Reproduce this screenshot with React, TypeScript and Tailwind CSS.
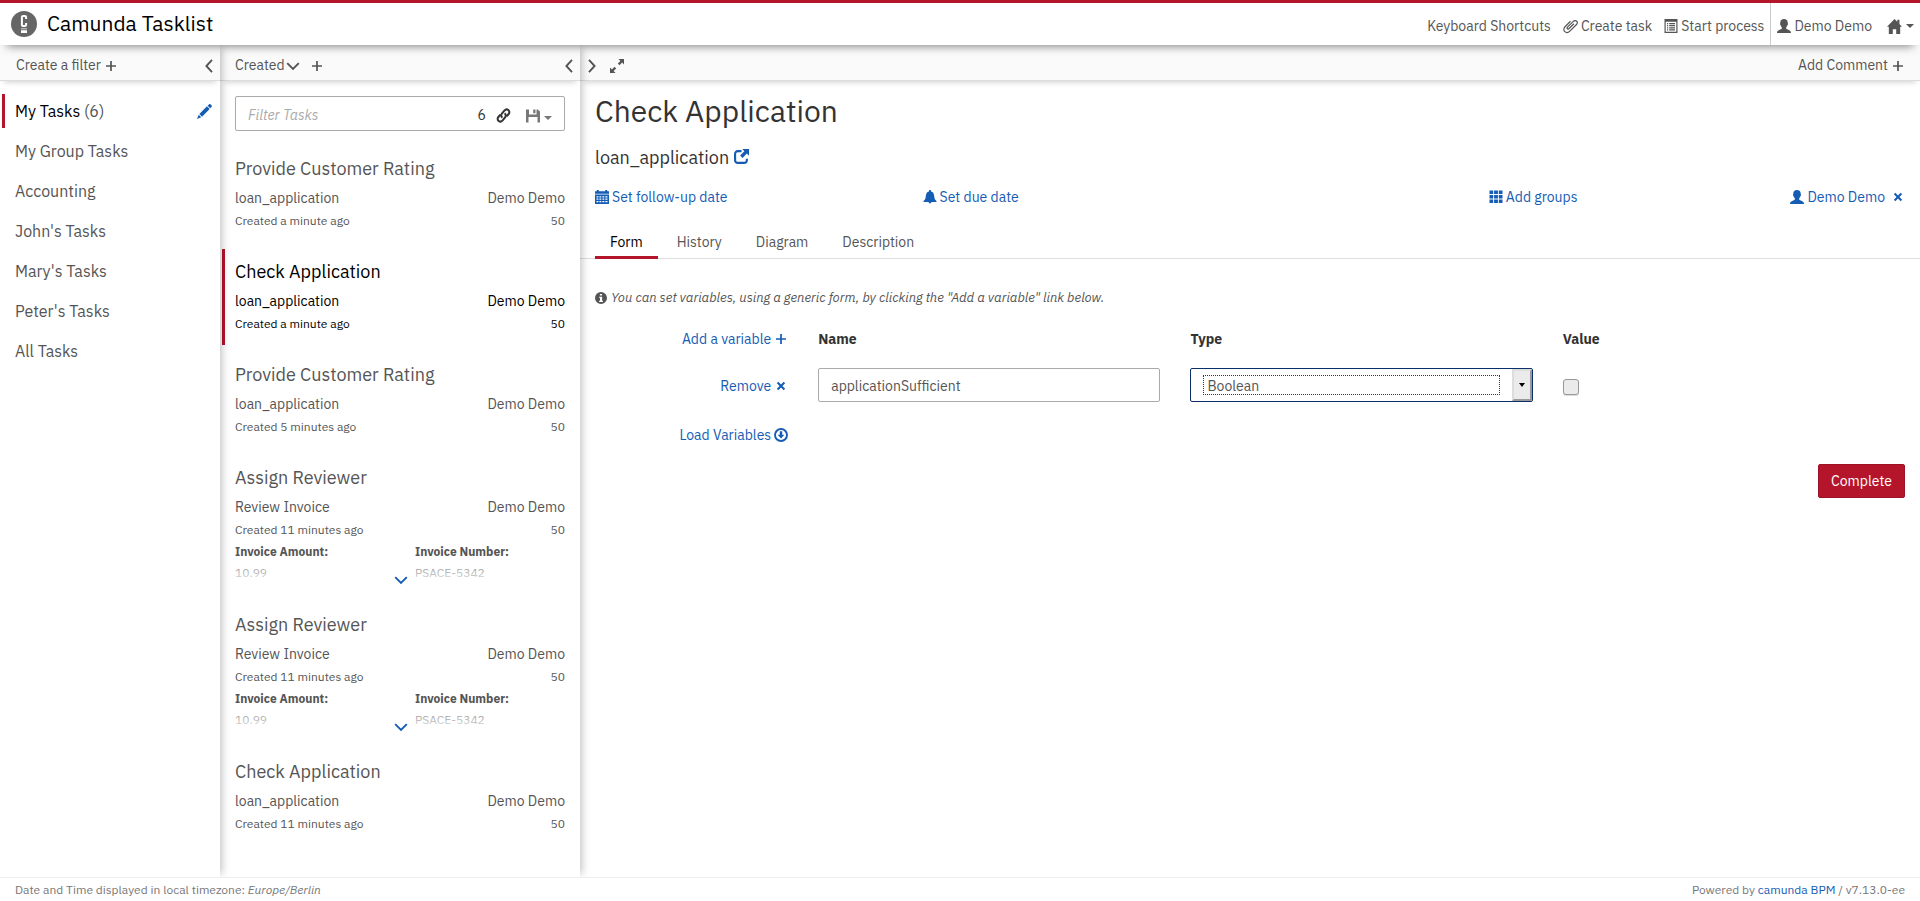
import type { ReactNode } from "react";

type IconProps = { className?: string };

function Svg({ size = 14, className = "", children }: { size?: number; className?: string; children: ReactNode }) {
  return (
    <svg
      width={size}
      height={size}
      viewBox="0 0 14 14"
      fill="currentColor"
      aria-hidden="true"
      className={`shrink-0 ${className}`}
    >
      {children}
    </svg>
  );
}

const Logo = () => (
  <svg width="26" height="26" viewBox="0 0 26 26" aria-hidden="true" className="shrink-0">
    <circle cx="13" cy="13" r="13" fill="#666" />
    <path d="M15.1 7.9V6.2a1.3 1.3 0 0 0-1.3-1.3h-1.6a1.3 1.3 0 0 0-1.3 1.3v7.6a1.3 1.3 0 0 0 1.3 1.3h1.6a1.3 1.3 0 0 0 1.3-1.3v-1.7" fill="none" stroke="#fff" strokeWidth="2" />
    <path d="M10 17.4h6v.8h-6zM10 19.3h6v2.7h-6z" fill="#fff" />
  </svg>
);

const Plus = ({ className }: IconProps) => (
  <Svg size={10} className={className}>
    <path d="M5.800 0h2.400v5.800H14v2.400H8.200V14H5.800V8.200H0V5.800h5.800z" />
  </Svg>
);

const Cross = ({ className }: IconProps) => (
  <Svg size={10} className={className}>
    <path d="M3.2 1.2 7 5l3.800-3.800 2 2L9 7l3.800 3.800-2 2L7 9l-3.800 3.800-2-2L5 7 1.200 3.200z" />
  </Svg>
);

const Chevron = ({ className, d }: IconProps & { d: string }) => (
  <Svg size={14} className={className}>
    <path d={d} fill="none" stroke="currentColor" strokeWidth="1.9" />
  </Svg>
);
const LEFT = "M10 .8 4.400 7l5.600 6.200";
const RIGHT = "M4 .8 9.600 7 4 13.200";
const DOWN = "M1.200 4.200 7 10l5.800-5.800";

const Caret = ({ className }: IconProps) => (
  <svg width="8" height="4" viewBox="0 0 8 4" fill="currentColor" aria-hidden="true" className={`shrink-0 ${className ?? ""}`}>
    <path d="M0 0h8L4 4z" />
  </svg>
);

const User = () => (
  <Svg>
    <path d="M7 0c2.300 0 3.700 1.400 3.700 3.600 0 .4 0 .6.200.9.300.4.100 1.200-.4 1.500-.2 1-.7 1.700-1.300 2.300v1.300c.3.600 1.400.9 2.500 1.300 1.500.6 2.300 1.200 2.300 3.100H0c0-1.900.8-2.500 2.300-3.100 1.100-.4 2.200-.7 2.500-1.300V8.300C4.200 7.700 3.700 7 3.500 6c-.5-.3-.7-1.100-.4-1.500.2-.3.200-.5.2-.9C3.300 1.400 4.700 0 7 0z" />
  </Svg>
);

const Home = () => (
  <Svg size={15}>
    <path d="M7 0 9.600 2.600V.8h2v3.800L14 7.300h-1.700V14H8.600V9.500H5.400V14H1.700V7.300H0z" />
  </Svg>
);

const Paperclip = () => (
  <Svg size={15}>
    <path
      d="M10.200 4.400 5.700 8.900c-.6.600-1.300.6-1.700.2s-.3-1 .2-1.600l5.200-5c1.200-1.200 2.600-1.300 3.400-.4s.7 2.200-.4 3.300l-6 5.900c-1.500 1.500-3.400 1.700-4.700.5s-1.200-3.200.2-4.600L7 2.100"
      fill="none"
      stroke="currentColor"
      strokeWidth="1.100"
    />
  </Svg>
);

const ListAlt = () => (
  <Svg>
    <path
      fillRule="evenodd"
      d="M.5 0h13v14H.5zM1.700 2.700v10.100h10.600V2.700zM3 4h1.200v1.200H3zM5.200 4H11v1.200H5.200zM3 6.100h1.200v1.200H3zM5.200 6.100H11v1.200H5.200zM3 8.200h1.200v1.200H3zM5.200 8.200H11v1.200H5.200zM3 10.300h1.200v1.200H3zM5.200 10.300H11v1.200H5.200z"
    />
  </Svg>
);

const Pencil = () => (
  <Svg size={15}>
    <path d="M11.400.3c.3-.3.800-.3 1.100 0l1.200 1.200c.3.300.3.800 0 1.100l-1.400 1.400-2.400-2.400zM9.300 2.200l2.500 2.500-7.100 7.100-2.500-2.500zM1.600 10l2.400 2.400-4 1.500z" />
  </Svg>
);

const LinkIcon = () => (
  <Svg size={15}>
    <g fill="none" stroke="currentColor" strokeWidth="1.900">
      <path d="M6 9C4.600 8 4.400 6.500 5.500 5.200l2.300-2.800c1.100-1.200 2.600-1.400 3.700-.5s1.300 2.500.3 3.700l-1.900 2.200" />
      <path d="M8 5c1.400 1 1.600 2.500.5 3.800l-2.300 2.800c-1.100 1.200-2.600 1.400-3.700.5s-1.300-2.500-.3-3.700l1.900-2.200" />
    </g>
  </Svg>
);

const Floppy = () => (
  <Svg>
    <path fillRule="evenodd" d="M0 .5h3v5h7.500v-5h1.300L14 2.500v11h-2.500V8h-9v5.500H0zM7.200.5h2.300v3.800H7.200z" />
  </Svg>
);

const Expand = () => (
  <Svg>
    <path d="M8.500 0H14v5.500l-1.900-1.900-2.600 2.600-1.700-1.700 2.600-2.600zM0 8.500l1.900 1.900 2.600-2.600 1.700 1.700-2.600 2.600L5.500 14H0z" />
  </Svg>
);

const Share = () => (
  <Svg size={15}>
    <path d="M7 2H3.500A2.500 2.500 0 0 0 1 4.500v6A2.500 2.500 0 0 0 3.500 13h6a2.500 2.500 0 0 0 2.500-2.500V9" fill="none" stroke="currentColor" strokeWidth="2" />
    <path d="M7.700 0H14v6.300l-2-2-4 4L5.700 6l4-4z" />
  </Svg>
);

const Calendar = () => (
  <Svg>
    <path
      fillRule="evenodd"
      d="M0 1.200h1.800V0h2v1.200h6.400V0h2v1.200H14v2.600H0zM0 4.600h14V14H0zM1.500 6.200v1.200h1.900V6.200zM4.400 6.200v1.200h1.900V6.200zM7.400 6.200v1.200h1.900V6.200zM10.300 6.200v1.200h2.200V6.200zM1.500 8.600v1.200h1.900V8.600zM4.400 8.600v1.200h1.900V8.600zM7.400 8.600v1.200h1.900V8.600zM10.300 8.600v1.200h2.200V8.600zM1.500 11v1.200h1.900V11zM4.400 11v1.200h1.900V11zM7.400 11v1.200h1.900V11zM10.300 11v1.200h2.200V11z"
    />
  </Svg>
);

const Bell = () => (
  <Svg>
    <path d="M7 0c.6 0 1 .4 1 1v.5c2.200.5 3 2.200 3.200 4.500.2 2.500.6 3.500 2.300 5v1H8.400a1.400 1.400 0 0 1-2.800 0H.500v-1c1.700-1.500 2.100-2.500 2.300-5C3 3.700 3.800 2 6 1.500V1c0-.6.400-1 1-1z" />
  </Svg>
);

const Grid = () => (
  <Svg>
    <path d="M.5.500h3.700v3.500H.5zM5.100.500h3.800v3.500H5.100zM9.800.500h3.700v3.500H9.800zM.5 5h3.700v3.500H.5zM5.100 5h3.800v3.500H5.100zM9.800 5h3.700v3.500H9.800zM.5 9.500h3.700V13H.5zM5.100 9.500h3.800V13H5.100zM9.800 9.500h3.700V13H9.800z" />
  </Svg>
);

const Info = () => (
  <Svg size={12}>
    <path fillRule="evenodd" d="M7 0a7 7 0 1 1 0 14A7 7 0 0 1 7 0zM5.700 2.200v2h2.500v-2zM4.800 5.400v1.300h1v3.600h-1v1.400h4.500v-1.400h-1V5.400z" />
  </Svg>
);

const Download = () => (
  <Svg>
    <circle cx="7" cy="7" r="6" fill="none" stroke="currentColor" strokeWidth="1.900" />
    <path d="M5.800 3.200h2.400v3.600h2.100L7 10.600 3.700 6.800h2.100z" />
  </Svg>
);

const filters = ["My Group Tasks", "Accounting", "John's Tasks", "Mary's Tasks", "Peter's Tasks", "All Tasks"];

type Task = { id: number; name: string; process: string; created: string; invoice?: boolean; active?: boolean };
const tasks: Task[] = [
  { id: 1, name: "Provide Customer Rating", process: "loan_application", created: "Created a minute ago" },
  { id: 2, name: "Check Application", process: "loan_application", created: "Created a minute ago", active: true },
  { id: 3, name: "Provide Customer Rating", process: "loan_application", created: "Created 5 minutes ago" },
  { id: 4, name: "Assign Reviewer", process: "Review Invoice", created: "Created 11 minutes ago", invoice: true },
  { id: 5, name: "Assign Reviewer", process: "Review Invoice", created: "Created 11 minutes ago", invoice: true },
  { id: 6, name: "Check Application", process: "loan_application", created: "Created 11 minutes ago" },
];

const barClass =
  "flex h-[36px] shrink-0 items-center border-b border-[#ddd] bg-[#fafafa] pt-[6px] shadow-[0_5px_6px_-4px_rgba(0,0,0,0.2)]";
const panelShadow = "shadow-[5px_0_8px_-3px_rgba(0,0,0,0.24)]";

function Header() {
  return (
    <header className="relative z-30 flex h-[45px] items-stretch border-t-[3px] border-[#b5152b] bg-white pl-[11px] pr-[6px] shadow-[0_8px_10px_-7px_rgba(0,0,0,0.5)]">
      <a href="#home" className="flex items-center gap-[10px] text-[21px] text-black">
        <Logo />
        Camunda Tasklist
      </a>
      <nav className="ml-auto flex items-stretch pt-[4px]">
        <button type="button" className="px-[6px]">Keyboard Shortcuts</button>
        <button type="button" className="flex items-center gap-[3px] px-[6px]">
          <Paperclip />
          Create task
        </button>
        <button type="button" className="flex items-center gap-[3px] px-[6px]">
          <ListAlt />
          Start process
        </button>
        <div className="-mt-[4px] flex border-l border-[#ccc] pt-[4px]">
          <button type="button" className="flex items-center gap-[3px] pl-[6px] pr-[15px]">
            <User />
            Demo Demo
          </button>
          <button type="button" aria-label="Apps" className="flex items-center gap-1">
            <Home />
            <Caret />
          </button>
        </div>
      </nav>
    </header>
  );
}

function Filters() {
  return (
    <aside className={`relative z-20 w-[220px] shrink-0 bg-white ${panelShadow}`}>
      <div className={`${barClass} justify-between pl-[16px] pr-[4px]`}>
        <button type="button" className="flex items-center gap-[5px]">
          Create a filter
          <Plus />
        </button>
        <button type="button" aria-label="Collapse filters">
          <Chevron d={LEFT} />
        </button>
      </div>
      <ul className="flex flex-col gap-[6px] pl-[2px] pt-[13px] text-[16px]">
        <li className="flex h-[34px] items-center justify-between border-l-[3px] border-[#b5152b] pl-[10px] pr-[8px]">
          <a href="#my-tasks">
            <span className="text-black">My Tasks</span> (6)
          </a>
          <button type="button" aria-label="Edit filter" className="text-[#155cb5]">
            <Pencil />
          </button>
        </li>
        {filters.map((name) => (
          <li key={name} className="flex h-[34px] items-center pl-[13px]">
            <a href="#filter">{name}</a>
          </li>
        ))}
      </ul>
    </aside>
  );
}

function TaskItem({ task }: { task: Task }) {
  return (
    <li className={`border-l-[3px] pb-[12px] pl-[10px] pr-[15px] pt-[11px] ${task.active ? "border-[#b5152b] text-black" : "border-transparent"}`}>
      <h2 className="text-[18px] leading-[24px]">
        <a href="#task">{task.name}</a>
      </h2>
      <div className="mt-[7px] flex justify-between leading-[20px]">
        <span>{task.process}</span>
        <span>Demo Demo</span>
      </div>
      <div className="mt-[4px] flex justify-between text-[12px] leading-[18px]">
        <span>{task.created}</span>
        <span>50</span>
      </div>
      {task.invoice && (
        <div className="relative mt-[2px] text-[12px]">
          <dl className="grid grid-cols-[180px_1fr]">
            <div>
              <dt className="font-bold leading-[22px]">Invoice Amount:</dt>
              <dd className="leading-[20px]">10.99</dd>
            </div>
            <div>
              <dt className="font-bold leading-[22px]">Invoice Number:</dt>
              <dd className="leading-[20px]">PSACE-5342</dd>
            </div>
          </dl>
          <div className="pointer-events-none absolute inset-x-0 bottom-0 h-[20px] bg-linear-to-b from-white/30 to-white/90" />
          <button type="button" aria-label="Show more" className="absolute -bottom-[4px] left-[159px] text-[#155cb5]">
            <Chevron d={DOWN} />
          </button>
        </div>
      )}
    </li>
  );
}

function TaskList() {
  return (
    <section className={`relative z-10 w-[360px] shrink-0 bg-white ${panelShadow}`}>
      <div className={`${barClass} pl-[15px] pr-[4px]`}>
        <button type="button" className="flex items-center gap-px">
          Created
          <Chevron d={DOWN} />
        </button>
        <button type="button" aria-label="Add sorting" className="ml-[12px]">
          <Plus />
        </button>
        <button type="button" aria-label="Collapse tasks" className="ml-auto">
          <Chevron d={LEFT} />
        </button>
      </div>
      <div className="mx-[15px] mt-[15px] flex h-[35px] items-center rounded-[2px] border border-[#aaa] px-[12px] pt-[4px]">
        <input
          type="text"
          aria-label="Filter Tasks"
          placeholder="Filter Tasks"
          className="min-w-0 flex-1 bg-transparent outline-none placeholder:italic placeholder:text-[#aaa]"
        />
        <span className="text-[#333]">6</span>
        <button type="button" aria-label="Copy link" className="ml-[10px] text-[#333]">
          <LinkIcon />
        </button>
        <button type="button" aria-label="Save filter" className="ml-[15px] flex items-center gap-1 text-[#777]">
          <Floppy />
          <Caret className="mt-[4px]" />
        </button>
      </div>
      <ul className="flex flex-col gap-[7px] pl-[2px] pt-[15px]">
        {tasks.map((task) => (
          <TaskItem key={task.id} task={task} />
        ))}
      </ul>
    </section>
  );
}

const linkClass = "flex items-center gap-[3px] text-[#155cb5]";
const formRow = "grid grid-cols-[193fr_342fr_342fr_342fr] items-center gap-x-[30px]";
const tabClass = "-mb-px flex h-[32px] items-center border-b-[3px] px-[15px] pt-[2px]";

function Detail() {
  return (
    <main className="min-w-0 flex-1 bg-white">
      <div className={`${barClass} pl-[5px] pr-[17px]`}>
        <button type="button" aria-label="Expand tasks">
          <Chevron d={RIGHT} />
        </button>
        <button type="button" aria-label="Full screen" className="ml-[11px]">
          <Expand />
        </button>
        <button type="button" className="ml-auto flex items-center gap-[5px]">
          Add Comment
          <Plus />
        </button>
      </div>

      <div className="px-[15px] pt-[9px]">
        <h1 className="text-[30px] leading-[42px] text-[#333]">Check Application</h1>
        <div className="mt-[13px] flex items-center gap-[5px] text-[18px] leading-[26px] text-[#333]">
          loan_application
          <a href="#process" aria-label="Open process" className="pb-[3px] text-[#155cb5]">
            <Share />
          </a>
        </div>
        <div className="mt-[16px] grid grid-cols-4 leading-[20px]">
          <button type="button" className={`${linkClass} justify-self-start`}>
            <Calendar />
            Set follow-up date
          </button>
          <button type="button" className={`${linkClass} justify-self-start`}>
            <Bell />
            Set due date
          </button>
          <button type="button" className={`${linkClass} justify-self-end`}>
            <Grid />
            Add groups
          </button>
          <div className={`${linkClass} justify-self-end`}>
            <button type="button" className={linkClass}>
              <User />
              Demo Demo
            </button>
            <button type="button" aria-label="Remove assignee" className="ml-[5px] mr-[2px]">
              <Cross />
            </button>
          </div>
        </div>
      </div>

      <nav className="mt-[20px] flex gap-[4px] border-b border-[#ddd] px-[15px]">
        <a href="#form" className={`${tabClass} border-[#b5152b] text-black`}>Form</a>
        <a href="#history" className={`${tabClass} border-transparent`}>History</a>
        <a href="#diagram" className={`${tabClass} border-transparent`}>Diagram</a>
        <a href="#description" className={`${tabClass} border-transparent`}>Description</a>
      </nav>

      <form className="px-[15px] pt-[29px]">
        <p className="flex items-center gap-1 text-[13px] italic leading-[20px]">
          <Info />
          You can set variables, using a generic form, by clicking the "Add a variable" link below.
        </p>

        <div className={`${formRow} mt-[21px] leading-[20px]`}>
          <button type="button" className="flex items-center gap-[5px] justify-self-end pr-[2px] text-[#155cb5]">
            Add a variable
            <Plus />
          </button>
          <label htmlFor="var-name" className="font-bold text-[#333]">Name</label>
          <label htmlFor="var-type" className="font-bold text-[#333]">Type</label>
          <label htmlFor="var-value" className="font-bold text-[#333]">Value</label>
        </div>

        <div className={`${formRow} mt-[19px]`}>
          <button type="button" className="flex items-center gap-[5px] justify-self-end pr-[2px] pt-[2px] text-[#155cb5]">
            Remove
            <Cross />
          </button>
          <input
            id="var-name"
            type="text"
            defaultValue="applicationSufficient"
            className="h-[34px] w-full rounded-[2px] border border-[#aaa] px-[12px] pt-[2px] outline-none"
          />
          <div className="flex h-[34px] items-stretch rounded-[2px] border border-[#0b2f6b]">
            <select
              id="var-type"
              defaultValue="Boolean"
              className="my-[6px] ml-[12px] mr-[12px] min-w-0 flex-1 appearance-none border border-dotted border-[#333] bg-white px-[3px] pt-px leading-[16px] outline-none"
            >
              <option>Boolean</option>
            </select>
            <span className="flex w-[20px] items-center justify-center border-2 border-b-[#999] border-l-[#ddd] border-r-[#999] border-t-[#ddd] bg-[#ebebeb] text-black">
              <svg width="6" height="4" viewBox="0 0 6 4" fill="currentColor" aria-hidden="true">
                <path d="M0 0h6L3 4z" />
              </svg>
            </span>
          </div>
          <input
            id="var-value"
            type="checkbox"
            className="mt-[4px] size-[16px] appearance-none rounded-[3px] border border-[#999] bg-[#ebebeb] shadow-[0_1px_1px_rgba(0,0,0,0.15)]"
          />
        </div>

        <div className={`${formRow} mt-[23px] leading-[20px]`}>
          <button type="button" className="flex items-center gap-[3px] justify-self-end text-[#155cb5]">
            Load Variables
            <Download />
          </button>
        </div>

        <div className="mt-[19px] flex justify-end">
          <button type="submit" className="h-[34px] rounded-[2px] border border-[#9d1226] bg-[#b5152b] px-[12px] text-white">
            Complete
          </button>
        </div>
      </form>
    </main>
  );
}

export default function App() {
  return (
    <div className="flex min-h-screen flex-col bg-white font-['IBM_Plex_Sans',Roboto,sans-serif] text-[14px] text-[#555]">
      <Header />
      <div className="flex flex-1 items-stretch">
        <Filters />
        <TaskList />
        <Detail />
      </div>
      <footer className="relative z-30 flex h-[24px] items-center justify-between border-t border-[#eee] bg-white px-[15px] text-[12px] text-[#777]">
        <span>
          Date and Time displayed in local timezone: <em>Europe/Berlin</em>
        </span>
        <span>
          Powered by <a href="#camunda" className="text-[#155cb5]">camunda BPM</a> / v7.13.0-ee
        </span>
      </footer>
    </div>
  );
}
